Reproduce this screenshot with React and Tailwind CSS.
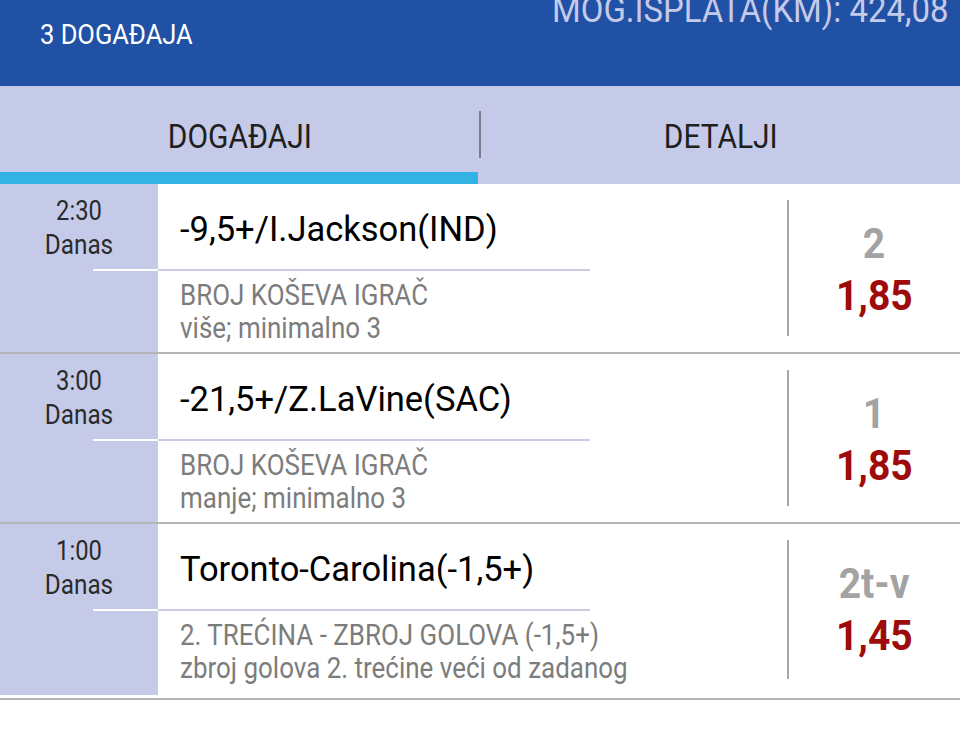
import React from 'react'

const events = [
  {
    time: '2:30',
    title: '-9,5+/I.Jackson(IND)',
    market: 'BROJ KOŠEVA IGRAČ',
    tip: 'više; minimalno 3',
    pick: '2',
    odd: '1,85',
  },
  {
    time: '3:00',
    title: '-21,5+/Z.LaVine(SAC)',
    market: 'BROJ KOŠEVA IGRAČ',
    tip: 'manje; minimalno 3',
    pick: '1',
    odd: '1,85',
  },
  {
    time: '1:00',
    title: 'Toronto-Carolina(-1,5+)',
    market: '2. TREĆINA - ZBROJ GOLOVA (-1,5+)',
    tip: 'zbroj golova 2. trećine veći od zadanog',
    pick: '2t-v',
    odd: '1,45',
  },
]

// narrow (condensed look) text helper
const Narrow = ({ children, className = '' }) => (
  <span className={'inline-block whitespace-nowrap ' + className}>{children}</span>
)

const EventRow = ({ ev, last }) => {
  return (
    <div className={last ? 'border-b-2 border-[#b5b5b5] pb-[3px]' : 'border-b-2 border-[#b5b5b5]'}>
      <div className={last ? 'relative flex h-[171px]' : 'relative flex h-[168px]'}>
        {/* time column */}
        <div className="flex w-[158px] shrink-0 flex-col items-center bg-[#c5cae9] pt-[10px] text-[27px] leading-[34px] text-[#2a2a2a]">
          <Narrow className="origin-center scale-x-[0.88]">{ev.time}</Narrow>
          <Narrow className="origin-center scale-x-[0.9]">Danas</Narrow>
        </div>

        <div className="flex flex-1 flex-col pl-[22px]">
          <div className="h-[85px] pt-[25px] text-[34.5px] leading-[40px] text-black">
            {ev.title}
          </div>
          <div className="flex flex-col items-start pt-[10px] text-[29px] leading-[33px] text-[#7c7c7c]">
            <Narrow className="origin-left scale-x-[0.895]">{ev.market}</Narrow>
            <Narrow className="origin-left scale-x-[0.895]">{ev.tip}</Narrow>
          </div>
        </div>

        <div className="flex w-[173px] shrink-0 items-stretch pt-[16px] pb-[16px]">
          <div className="w-[2px] bg-[#a8a8a8]"></div>
          <div className="flex flex-1 flex-col items-center pt-[18px] text-[42px] font-bold leading-[52px]">
            <Narrow className="origin-center scale-x-[0.93] text-[#a3a3a3]">{ev.pick}</Narrow>
            <Narrow className="origin-center scale-x-[0.93] text-[#9e0b0b]">{ev.odd}</Narrow>
          </div>
        </div>

        {/* separator under the title, crossing into the time column */}
        <div className="absolute left-[93px] top-[85px] flex h-[2px] w-[497px]">
          <div className="w-[65px] bg-white"></div>
          <div className="flex-1 bg-[#c9cce4]"></div>
        </div>
      </div>
    </div>
  )
}

const App = () => {
  return (
    <div className="h-[736px] w-[960px] overflow-hidden bg-white font-['Roboto',sans-serif]">
      <div className="flex h-[86px] items-start justify-between overflow-hidden bg-[#2151a5] pl-[40px] pr-[12px]">
        <Narrow className="mt-[20px] origin-left scale-x-[0.91] text-[28px] leading-[30px] text-white">3 DOGAĐAJA</Narrow>
        <Narrow className="mt-[-10px] origin-right scale-x-[0.89] text-[37px] leading-[40px] text-[#c5cae9]">MOG.ISPLATA(KM): 424,08</Narrow>
      </div>

      <div className="bg-[#c5cae9]">
        <div className="flex h-[86px] items-start">
          <div className="flex flex-1 justify-center pt-[30px] text-[34px] leading-[40px] text-[#1f1f1f]">
            <Narrow className="origin-center scale-x-[0.88]">DOGAĐAJI</Narrow>
          </div>
          <div className="mt-[25px] h-[47px] w-[2px] bg-[#7b7c8c]"></div>
          <div className="flex flex-1 justify-center pt-[30px] text-[34px] leading-[40px] text-[#1f1f1f]">
            <Narrow className="origin-center scale-x-[0.88]">DETALJI</Narrow>
          </div>
        </div>
        <div className="h-[12px] w-[478px] bg-[#33b3e3]"></div>
      </div>

      <div className="flex flex-col">
        {events.map((ev, i) => (
          <EventRow key={i} ev={ev} last={i === events.length - 1} />
        ))}
      </div>
    </div>
  )
}

export default App
